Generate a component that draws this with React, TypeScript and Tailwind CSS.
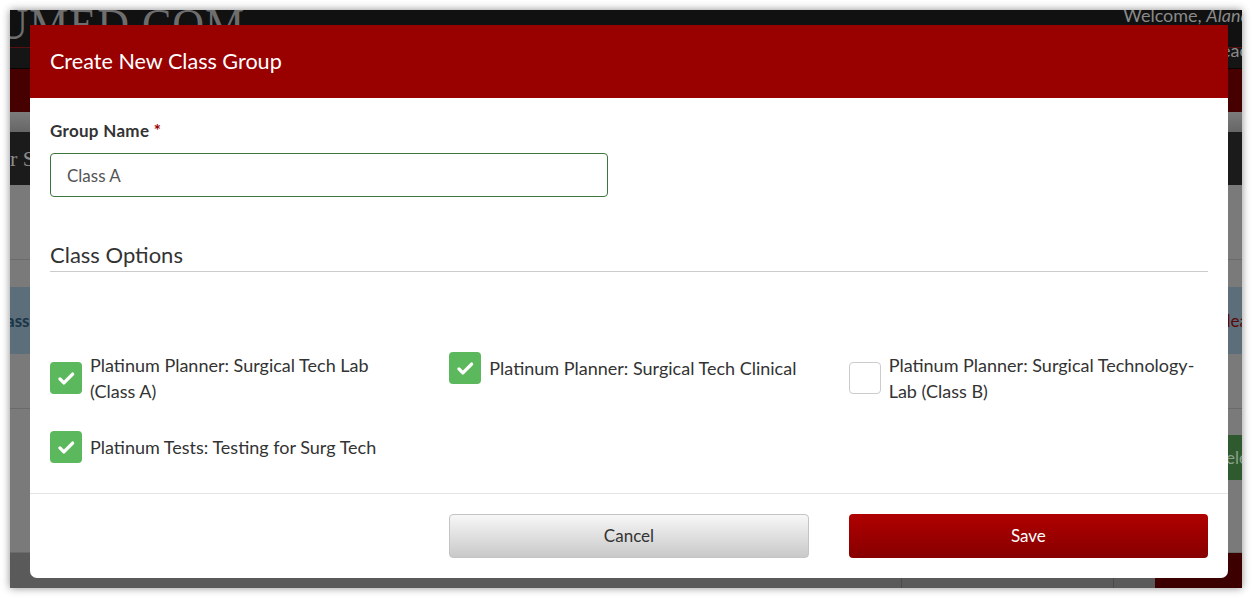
import React, { useState } from 'react';

interface ClassOption {
    id: number;
    label: string;
    checked: boolean;
}

const initialOptions: ClassOption[] = [
    { id: 1, label: 'Platinum Planner: Surgical Tech Lab (Class A)', checked: true },
    { id: 2, label: 'Platinum Planner: Surgical Tech Clinical', checked: true },
    { id: 3, label: 'Platinum Planner: Surgical Technology-Lab (Class B)', checked: false },
    { id: 4, label: 'Platinum Tests: Testing for Surg Tech', checked: true },
];

const CheckBox = ({ checked }: { checked: boolean }) => (
    <span
        className={
            checked
                ? 'flex h-8 w-8 shrink-0 items-center justify-center rounded-[4px] bg-[#5cb85c]'
                : 'flex h-8 w-8 shrink-0 items-center justify-center rounded-[4px] border border-[#cccccc] bg-white'
        }
    >
        {checked && (
            <svg viewBox="0 0 24 24" width="21" height="21" fill="none">
                <path d="M4.5 12.5l4.5 4.5 10-10" stroke="white" strokeWidth="3.8" strokeLinecap="round" strokeLinejoin="round" />
            </svg>
        )}
    </span>
);

// the dimmed page behind the dialog
const Backdrop = () => (
    <div className="flex h-full flex-col">
        <div className="relative flex h-[37px] shrink-0 items-start justify-between overflow-hidden bg-[#111111]">
            <span className="ml-[-62px] mt-[-7px] font-['Liberation_Serif',serif] text-[44px] leading-none tracking-[1px] text-[#6e6e6e]">
                INUMED.COM
            </span>
            <span className="mr-[-8px] mt-[-8px] font-['Lato',sans-serif] text-[18px] text-[#8a8a8a]">
                Welcome, <i>Aland</i>
            </span>
        </div>
        <div className="h-px shrink-0 bg-[#5a1010]" />
        <div className="flex h-[20px] shrink-0 items-start justify-end bg-[#151515]">
            <span className="mr-[-6px] mt-[-7px] font-['Lato',sans-serif] text-[18px] leading-none text-[#8a8a8a]">Teac</span>
        </div>
        <div className="h-[44px] shrink-0 border-t border-[#050505] bg-[#470000]" />
        <div className="h-[20px] shrink-0 bg-gradient-to-b from-[#7c7c7c] to-[#666666]" />
        <div className="flex h-[53px] shrink-0 items-center bg-[#1b1b1b]">
            <span className="font-['Liberation_Serif',serif] text-[22px] text-[#8c8c8c]">r S</span>
        </div>
        <div className="h-[75px] shrink-0 border-b border-[#6a6a6a] bg-[#7a7a7a]" />
        <div className="h-[27px] shrink-0 bg-[#7a7a7a]" />
        <div className="flex h-[67px] shrink-0 items-center justify-between bg-[#5b6e79]">
            <span className="ml-[-4px] font-['Lato',sans-serif] text-[17px] font-bold text-[#1c3447]">ass</span>
            <span className="mr-[-6px] font-['Lato',sans-serif] text-[17px] text-[#5a0808]">Clea</span>
        </div>
        <div className="h-[55px] shrink-0 border-b border-[#6a6a6a] bg-[#7a7a7a]" />
        <div className="h-[26px] shrink-0 bg-[#7a7a7a]" />
        <div className="flex h-[45px] shrink-0 justify-end bg-[#7a7a7a]">
            <div className="flex w-[140px] items-center justify-end bg-[#2f5a2f]">
                <span className="mr-[-6px] font-['Lato',sans-serif] text-[17px] text-[#8aa08a]">Dele</span>
            </div>
        </div>
        <div className="h-[73px] shrink-0 border-b border-[#6a6a6a] bg-[#7a7a7a]" />
        <div className="flex flex-1 bg-[#5a5a5a]">
            <div className="w-[892px] border-r border-[#4a4a4a]" />
            <div className="flex w-[212px] justify-center border-r border-[#4a4a4a] font-['Lato',sans-serif] text-[15px] leading-none text-[#cfcfcf]">
                Cl
            </div>
            <div className="w-[41px]" />
            <div className="flex-1 bg-[#3d0000]" />
        </div>
    </div>
);

const App: React.FC = () => {
    const [options, setOptions] = useState<ClassOption[]>(initialOptions);
    const [groupName, setGroupName] = useState<string>('Class A');

    const toggle = (id: number) => {
        setOptions(options.map(o => (o.id === id ? { ...o, checked: !o.checked } : o)));
    };

    return (
        <div className="h-[598px] w-[1252px] bg-white p-[10px] font-['Lato',sans-serif]">
            <div className="relative h-[578px] w-[1232px] overflow-hidden shadow-[0_0_8px_rgba(0,0,0,0.45)]">
                <Backdrop />

                <div className="absolute left-[20px] top-[15px] flex h-[553px] w-[1198px] flex-col overflow-hidden rounded-b-[7px] bg-white">
                    <div className="flex h-[73px] shrink-0 items-center bg-[#990000] px-5">
                        <h1 className="text-[21.6px] leading-none text-white">Create New Class Group</h1>
                    </div>

                    <div className="flex-1 px-5 pt-[24px]">
                        <label className="block text-[17px] font-bold leading-[18px] tracking-[0.3px] text-[#333333]">
                            Group Name <span className="text-[#990000]">*</span>
                        </label>
                        <input
                            value={groupName}
                            onChange={e => setGroupName(e.target.value)}
                            className="mt-[13px] block h-[44px] w-[558px] rounded-[4px] border border-[#3c763d] px-4 text-[17px] text-[#555555] outline-none"
                        />

                        <h2 className="mt-[44px] border-b border-[#cccccc] pb-[2px] text-[22px] leading-[28px] text-[#333333]">
                            Class Options
                        </h2>

                        <div className="mt-[80px] grid grid-cols-3 items-start gap-x-10 gap-y-[27px]">
                            {options.map(o => (
                                <button
                                    key={o.id}
                                    type="button"
                                    onClick={() => toggle(o.id)}
                                    className="flex items-center gap-[8px] text-left"
                                >
                                    <CheckBox checked={o.checked} />
                                    <span className="max-w-[320px] text-[18px] leading-[26px] text-[#333333]">{o.label}</span>
                                </button>
                            ))}
                        </div>
                    </div>

                    <div className="grid shrink-0 grid-cols-3 gap-x-10 border-t border-[#e5e5e5] px-5 pb-5 pt-5">
                        <button className="col-start-2 h-[44px] rounded-[4px] border border-[#c4c4c4] bg-gradient-to-b from-[#f7f7f7] to-[#c9c9c9] text-[17px] text-[#333333]">
                            Cancel
                        </button>
                        <button className="col-start-3 h-[44px] rounded-[4px] bg-gradient-to-b from-[#b00000] to-[#870000] text-[17px] text-white">
                            Save
                        </button>
                    </div>
                </div>
            </div>
        </div>
    );
};

export default App;
